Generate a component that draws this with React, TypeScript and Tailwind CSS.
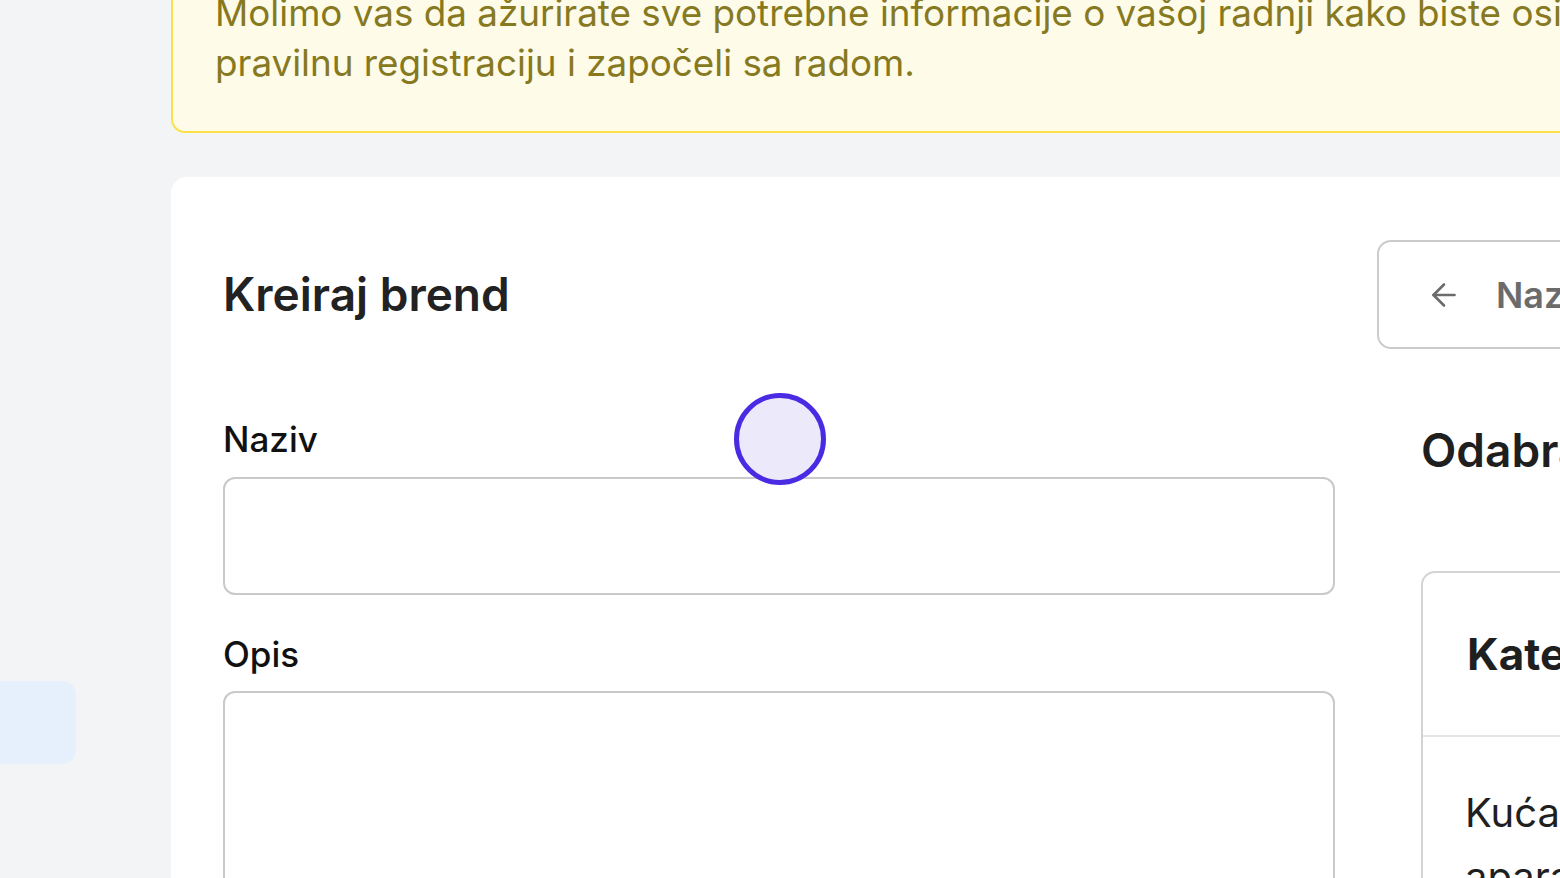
import { ArrowLeft } from "lucide-react";

export default function App() {
  return (
    <div className="relative w-[1560px] h-[878px] overflow-hidden bg-[#f3f4f6] flex font-['Inter',sans-serif]">
      {/* Sidebar */}
      <div className="w-[171px] shrink-0 flex flex-col pt-[681px]">
        <div className="w-[76px] h-[83px] bg-[#e6f0fc] rounded-r-[14px]" />
      </div>

      {/* Main content */}
      <div className="w-[1500px] shrink-0 flex flex-col mt-[-57px]">
        {/* Warning banner */}
        <div className="rounded-[14px] border-2 border-[#fde047] bg-[#fefbe8] px-[42px] py-[43px] text-[36.8px] leading-[50px] text-[#86791f] whitespace-nowrap">
          Molimo vas da ažurirate sve potrebne informacije o vašoj radnji kako biste osigurali
          <br />
          pravilnu registraciju i započeli sa radom.
        </div>

        {/* Card */}
        <div className="mt-[44px] bg-white rounded-[16px] pl-[52px] pt-[63px] pb-[40px] flex gap-[42px]">
          {/* Form column */}
          <div className="w-[1112px] shrink-0 flex flex-col">
            <div className="h-[109px] flex items-center text-[46px] font-semibold text-[#222]">
              Kreiraj brend
            </div>
            <label className="mt-[70px] text-[35px] leading-[40px] font-medium text-[#111]">
              Naziv
            </label>
            <div className="mt-[18px] h-[118px] border-2 border-[#c9c9c9] rounded-[12px] bg-white" />
            <label className="mt-[39px] text-[35px] leading-[40px] font-medium text-[#111]">
              Opis
            </label>
            <div className="mt-[17px] h-[260px] border-2 border-[#c9c9c9] rounded-[12px] bg-white" />
          </div>

          {/* Right column */}
          <div className="w-[400px] shrink-0 flex flex-col">
            <div className="h-[109px] w-[320px] border-2 border-[#cbcbcb] rounded-[14px] flex items-center pl-[47px] gap-[34px] text-[#6b6b6b] text-[36px] font-semibold">
              <ArrowLeft size={36} strokeWidth={1.75} />
              <span>Nazad</span>
            </div>
            <div className="mt-[73px] pl-[44px] text-[46px] leading-[56px] font-semibold text-[#1f1f1f] whitespace-nowrap">
              Odabrana kategorija
            </div>
            <div className="mt-[93px] ml-[44px] w-[400px] border-2 border-[#d4d4d4] rounded-t-[14px]">
              <div className="h-[164px] flex items-center pl-[44px] border-b-2 border-[#e5e5e5] text-[44px] font-bold text-[#1f1f1f]">
                Kategorija
              </div>
              <div className="pl-[42px] pt-[44px] text-[40px] leading-[64px] text-[#1f1f1f] w-[230px]">
                Kućanski aparati
              </div>
            </div>
          </div>
        </div>
      </div>

      {/* Click indicator */}
      <div className="absolute left-[734px] top-[393px] w-[92px] h-[92px] rounded-full border-[5px] border-[#4a2ae3] bg-[#ece9fb]" />
    </div>
  );
}
